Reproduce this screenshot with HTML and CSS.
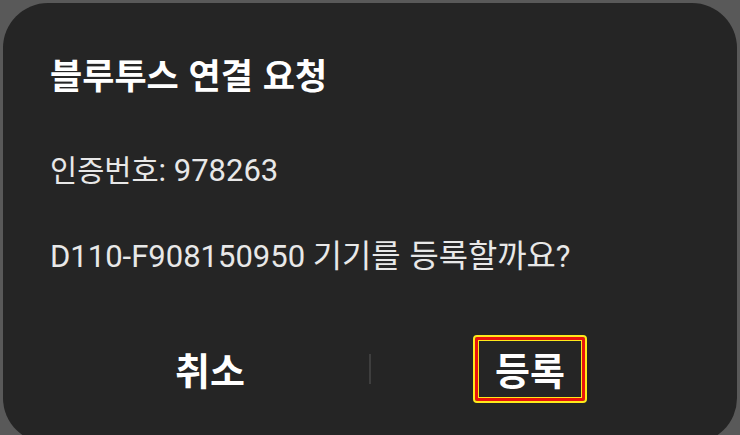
FILE: index.html
```html
<!DOCTYPE html>
<html lang="ko">
<head>
<meta charset="utf-8">
<title>블루투스 연결 요청</title>
<link rel="stylesheet" href="styles.css">
</head>
<body>
<div class="dialog">
  <h1 class="title">블루투스 연결 요청</h1>
  <p class="line line-code"><span class="ko">인증번호</span>: 978263</p>
  <p class="line line-device">D110-F908150950 <span class="ko ko-wide">기기를 등록할까요</span>?</p>
  <div class="actions">
    <div class="action"><span class="btn">취소</span></div>
    <div class="divider"></div>
    <div class="action"><span class="btn btn-focus">등록</span></div>
  </div>
</div>
</body>
</html>
```
FILE: styles.css
```css
html, body {
  margin: 0;
  padding: 0;
  background: #595959;
  width: 740px;
  height: 435px;
  overflow: hidden;
}
.dialog {
  margin: 3px 3px 0 3px;
  height: 440px;
  box-sizing: border-box;
  background: #252525;
  border-radius: 45px;
  padding: 49px 48px 0 47px;
  display: flex;
  flex-direction: column;
  font-family: Roboto, "Noto Sans CJK KR", sans-serif;
  color: #e8e8e8;
}
.title {
  margin: 0;
  font-family: "Noto Sans CJK KR", sans-serif;
  font-weight: 700;
  font-size: 35px;
  line-height: 44px;
  color: #ffffff;
}
.line {
  margin: 0;
  font-size: 31px;
  line-height: 40px;
}
.ko {
  font-family: "Noto Sans CJK KR", sans-serif;
  font-size: 29.5px;
}
.ko-wide {
  font-size: 31.8px;
}
.line-code {
  margin-top: 52px;
}
.line-device {
  margin-top: 42px;
}
.actions {
  margin-top: 58px;
  margin-left: 1px;
  display: flex;
  align-items: center;
  height: 68px;
}
.action {
  flex: 1;
  display: flex;
  justify-content: center;
  align-items: center;
}
.divider {
  width: 2px;
  height: 30px;
  background: #3e3e3e;
}
.btn {
  font-family: "Noto Sans CJK KR", sans-serif;
  font-weight: 700;
  font-size: 38px;
  line-height: 44px;
  color: #ffffff;
}
.btn-focus {
  box-sizing: border-box;
  width: 110px;
  height: 64px;
  display: flex;
  align-items: center;
  justify-content: center;
  border: 3px solid #e8140c;
  outline: 2px solid #ffe81a;
  outline-offset: 0;
  box-shadow: inset 0 0 0 1px #ffe81a;
  border-radius: 2px;
}
```
